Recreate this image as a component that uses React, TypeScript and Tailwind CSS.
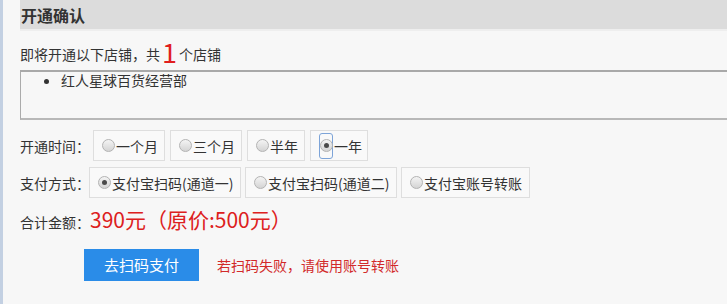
import React from "react";

const font = { fontFamily: '"Noto Sans CJK SC", "Noto Sans", sans-serif' };

function Radio({ checked, focus }: { checked?: boolean; focus?: boolean }) {
  const dot = (
    <span className="relative inline-flex h-[13px] w-[13px] shrink-0 items-center justify-center rounded-full border border-[#b3b3b3] bg-gradient-to-b from-[#f4f4f4] to-[#d4d4d4]">
      {checked && <span className="h-[5px] w-[5px] rounded-full bg-[#4a4a4a]" />}
    </span>
  );
  if (focus) {
    return (
      <span className="inline-flex h-[26px] w-[14px] shrink-0 items-center justify-center rounded-[3px] border border-[#7da4d8]">
        {dot}
      </span>
    );
  }
  return dot;
}

function Opt({
  label,
  checked,
  focus,
  w,
}: {
  label: string;
  checked?: boolean;
  focus?: boolean;
  w: string;
}) {
  return (
    <div
      className={`flex h-[31px] shrink-0 items-center whitespace-nowrap border border-[#dedede] bg-[#f9f9f9] pl-[8px] text-[14px] text-[#333] ${w}`}
    >
      <Radio checked={checked} focus={focus} />
      <span className="ml-[1px] leading-none">{label}</span>
    </div>
  );
}

export default function App() {
  return (
    <div className="flex h-[304px] w-[727px] overflow-hidden bg-[#f7f7f7]" style={font}>
      <div className="w-[3px] shrink-0 bg-[#c3d0e2]" />
      <div className="flex min-w-0 flex-1 flex-col pl-[17px]">
        <div className="flex h-[29px] shrink-0 items-center bg-[#dcdcdc] pl-[1px] text-[16px] font-bold text-[#333]">
          开通确认
        </div>
        <div className="h-[2px] shrink-0 bg-[#eeeeee]" />
        <div className="mt-[8px] flex h-[22px] shrink-0 items-end text-[14px] text-[#333]">
          <span className="leading-none">即将开通以下店铺，共</span>
          <span className="mx-[2px] text-[27px] leading-[19px] text-[#e01e1e]">1</span>
          <span className="leading-none">个店铺</span>
        </div>
        <div className="mt-[9px] h-[50px] shrink-0 border-t-2 border-b-2 border-l border-[#ababab] border-t-[#a9a9a9] border-b-[#b8b8b8]">
          <ul className="list-disc pl-[40px] text-[14px] leading-[16px] text-[#333]">
            <li>红人星球百货经营部</li>
          </ul>
        </div>
        <div className="mt-[10px] flex shrink-0 items-center text-[14px] text-[#333]">
          <span className="w-[73px] shrink-0 whitespace-nowrap leading-none">开通时间：</span>
          <div className="flex gap-[5px]">
            <Opt label="一个月" w="w-[72px]" />
            <Opt label="三个月" w="w-[72px]" />
            <Opt label="半年" w="w-[58px]" />
            <Opt label="一年" w="w-[58px]" checked focus />
          </div>
        </div>
        <div className="mt-[6px] flex shrink-0 items-center text-[14px] text-[#333]">
          <span className="w-[69px] shrink-0 whitespace-nowrap leading-none">支付方式：</span>
          <div className="flex gap-[4px]">
            <Opt label="支付宝扫码(通道一)" checked w="w-[152px]" />
            <Opt label="支付宝扫码(通道二)" w="w-[152px]" />
            <Opt label="支付宝账号转账" w="w-[129px]" />
          </div>
        </div>
        <div className="mt-[7px] flex h-[28px] shrink-0 items-baseline">
          <span className="w-[70px] shrink-0 whitespace-nowrap text-[14px] leading-[28px] text-[#333]">合计金额：</span>
          <span className="whitespace-nowrap text-[21px] leading-[28px] text-[#dd2020]">390元（原价:500元）</span>
        </div>
        <div className="mt-[16px] flex shrink-0 items-center">
          <button className="ml-[64px] flex h-[32px] w-[115px] items-center justify-center bg-[#2a8ce8] text-[15px] text-white">
            去扫码支付
          </button>
          <span className="ml-[18px] text-[14px] text-[#d22a2a]">若扫码失败，请使用账号转账</span>
        </div>
      </div>
    </div>
  );
}
